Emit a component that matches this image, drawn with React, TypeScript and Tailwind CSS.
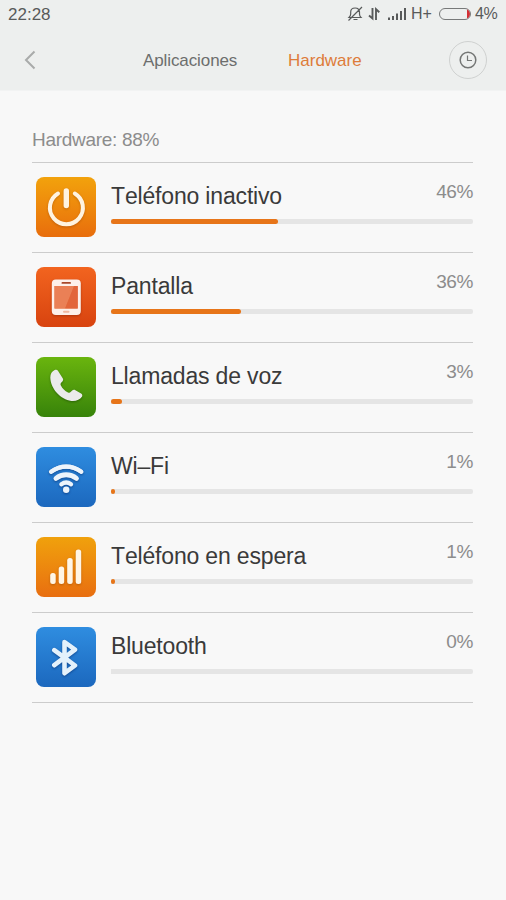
import React from 'react';

type Item = {
    name: string;
    percent: number;
    tile: string;
    icon: React.ReactNode;
};

const PowerIcon = () => (
    <svg className="w-full h-full drop-shadow-[0_1px_1px_rgba(120,50,0,0.35)]" viewBox="0 0 60 60" fill="none" stroke="#fff3e0" strokeLinecap="round">
        <path d="M22 16.5a16.5 16.5 0 1 0 16.8 0" strokeWidth="4" />
        <path d="M30.3 14v14.5" strokeWidth="5.4" />
    </svg>
);

const ScreenIcon = () => (
    <svg className="w-full h-full drop-shadow-[0_1px_1px_rgba(100,20,0,0.4)]" viewBox="0 0 60 60">
        <rect x="15.8" y="12.5" width="29" height="35.5" rx="4" fill="#fdf0ea" />
        <rect x="18.5" y="19" width="23.2" height="22.5" fill="#e5703f" />
        <path d="M18.5 19h19.6l-9 22.5H18.5z" fill="#ea8056" />
        <path d="M41.7 19v22.5H29.1l9-22.5z" fill="#e2653a" />
        <rect x="25.5" y="15" width="9.5" height="1.8" rx="0.9" fill="#a8482a" />
        <rect x="27" y="43.8" width="6.5" height="2" rx="1" fill="#f0b8a0" />
    </svg>
);

const CallIcon = () => (
    <svg className="w-full h-full drop-shadow-[0_1px_1px_rgba(20,60,0,0.5)]" viewBox="0 0 60 60">
        <path
            d="M18.7 13c1.500-.6 2.700-.2 3.400 1l4.600 7.200c.7 1.200.6 2.200-.3 3.200l-1.300 1.400c-.7.8-.7 1.600-.2 2.700 1.500 3 4 5.600 7.100 7 1.100.5 1.900.4 2.600-.4l1.600-1.500c.9-.9 2-1 3.200-.3l5.700 3.300c1.300.8 1.500 2 .8 3.200-1.900 3.100-6.200 4.600-10.600 4.100C24.800 42.800 14.800 32 14.300 20.800c-.1-3.900 1.600-6.600 4.400-7.800z"
            fill="#ebebeb"
        />
    </svg>
);

const WifiIcon = () => (
    <svg className="w-full h-full drop-shadow-[0_1px_1px_rgba(0,30,90,0.5)]" viewBox="0 0 60 60" fill="none" stroke="#edf4fb" strokeLinecap="round">
        <path d="M15 24.8a25 25 0 0 1 30.400 0" strokeWidth="4.200" />
        <path d="M15.400 24.500Q30.200 14.800 45 24.500" strokeWidth="4" />
        <path d="M20 31.400a16.500 16.500 0 0 1 20.400 0" strokeWidth="5" />
        <path d="M25.400 37.200a8.500 8.500 0 0 1 9.600 0" strokeWidth="4.400" />
        <circle cx="30.200" cy="42.700" r="3.200" fill="#edf4fb" stroke="none" />
    </svg>
);

const SignalIcon = () => (
    <svg className="w-full h-full drop-shadow-[0_1px_1px_rgba(130,60,0,0.45)]" viewBox="0 0 60 60" fill="#fff5e6">
        <rect x="14.2" y="36" width="5.5" height="11" rx="2.5" />
        <rect x="22.7" y="29.5" width="5.5" height="17.5" rx="2.5" />
        <rect x="31.2" y="21" width="5.5" height="26" rx="2.5" />
        <rect x="39.7" y="12.5" width="5.5" height="34.5" rx="2.5" />
    </svg>
);

const BluetoothIcon = () => (
    <svg className="w-full h-full drop-shadow-[0_1px_1px_rgba(0,30,90,0.5)]" viewBox="0 0 60 60" fill="none" stroke="#e4f1fb" strokeWidth="4.6" strokeLinecap="round" strokeLinejoin="round">
        <path d="M18.3 23.2 39 38.500 28.500 46.200V15L39 22.600 18.300 38.200" />
    </svg>
);

const items: Item[] = [
    { name: 'Teléfono inactivo', percent: 46, tile: 'from-[#f2a20c] to-[#e86d0c]', icon: <PowerIcon /> },
    { name: 'Pantalla', percent: 36, tile: 'from-[#f2641f] to-[#d8430f]', icon: <ScreenIcon /> },
    { name: 'Llamadas de voz', percent: 3, tile: 'from-[#6ab50e] to-[#37830a]', icon: <CallIcon /> },
    { name: 'Wi–Fi', percent: 1, tile: 'from-[#2f8de0] to-[#1c68be]', icon: <WifiIcon /> },
    { name: 'Teléfono en espera', percent: 1, tile: 'from-[#f0a10c] to-[#e86e10]', icon: <SignalIcon /> },
    { name: 'Bluetooth', percent: 0, tile: 'from-[#2f8de0] to-[#1c68be]', icon: <BluetoothIcon /> },
];

const StatusBar = () => (
    <div className="flex items-center h-7 pl-2 pr-2 text-[16px] text-[#585a5a]">
        <span className="text-[17px] mt-px">22:28</span>
        <div className="flex items-center ml-auto">
            <svg className="w-4 h-4" viewBox="0 0 16 16" fill="none" stroke="currentColor" strokeWidth="1.2">
                <path d="M2 11.5h12c-1-1-1.5-2-1.5-3.500V6c0-2.500-1.700-4-4.400-4S3.700 3.500 3.700 6v2c0 1.500-.7 2.500-1.700 3.500zM6.500 13.500h4M15 1 1.500 14.500" />
            </svg>
            <svg className="w-3 h-4 ml-[5px]" viewBox="0 0 12 16" fill="none" stroke="currentColor" strokeWidth="1.9">
                <path d="M4.500 2v10.500L1 9.500M8 14V3.200l3.300 3" />
            </svg>
            <svg className="w-[18px] h-4 ml-[8px]" viewBox="0 0 18 16" fill="currentColor">
                <path d="M0 11.500h2V14H0zM4 10h2v4H4zM8 7.500h2V14H8zM12 5h2v9h-2zM16 2h2v12h-2z" />
            </svg>
            <span className="ml-[5px] w-[22px]">H+</span>
            <div className="flex justify-end w-8 h-3 ml-1.5 border border-[#777979] rounded-full overflow-hidden">
                <div className="w-[3px] bg-[#d22f35]" />
            </div>
            <span className="ml-1 w-[23px] tracking-[-0.3px]">4%</span>
        </div>
    </div>
);

const Header = () => (
    <header className="h-[91px] bg-[#edefee] border-b border-[#f2f3f3]">
        <StatusBar />
        <nav className="flex items-center h-[63px] pr-[19px] text-[17px]">
            <button className="ml-6">
                <svg className="w-3 h-5" viewBox="0 0 12 20" fill="none" stroke="#a9abaa" strokeWidth="2">
                    <path d="M10.5 1.5 2 10l8.5 8.5" />
                </svg>
            </button>
            <button className="ml-[107px] mt-0.5 w-[95px] tracking-[-0.1px] text-left whitespace-nowrap text-[#6c6e6d]">Aplicaciones</button>
            <button className="ml-[50px] mt-0.5 text-[#de7c3a]">Hardware</button>
            <button className="flex items-center justify-center w-[38px] h-[38px] ml-auto border border-[#cfd1d0] rounded-full">
                <svg className="w-[18px] h-[18px]" viewBox="0 0 18 18" fill="none" stroke="#747675" strokeWidth="1.5">
                    <circle cx="9" cy="9" r="7.8" />
                    <path d="M8.5 4.5v5h4.5" strokeWidth="1.2" />
                </svg>
            </button>
        </nav>
    </header>
);

const Row = ({ item }: { item: Item }) => (
    <li className="flex h-[90px] pl-1 pt-3.5 border-b border-[#cccccc]">
        <div className={`w-[60px] h-[60px] shrink-0 rounded-lg bg-linear-to-b ${item.tile}`}>{item.icon}</div>
        <div className="flex-1 ml-[15px]">
            <div className="flex justify-between h-[42px]">
                <span className="text-[23px] leading-[38px] tracking-[-0.17px] text-[#3a3a3a] [font-kerning:none]">{item.name}</span>
                <span className="text-[19px] leading-[29px] tracking-[-0.4px] text-[#8c8c8c]">{item.percent}%</span>
            </div>
            <div className="h-[5px] bg-[#e5e5e5] rounded-r-xs">
                <div className="h-full bg-[#e77519] rounded-full" style={{ width: `${item.percent}%` }} />
            </div>
        </div>
    </li>
);

export default function App() {
    return (
        <div className="w-[506px] h-[900px] overflow-hidden bg-[#f8f8f8] font-['Liberation_Sans',sans-serif]">
            <Header />
            <main className="pl-8 pr-[33px]">
                <h2 className="h-[72px] pt-[35px] text-[19px] leading-7 tracking-[-0.3px] text-[#8c8c8c] border-b border-[#cccccc]">Hardware: 88%</h2>
                <ul>
                    {items.map((item) => (
                        <Row key={item.name} item={item} />
                    ))}
                </ul>
            </main>
        </div>
    );
}
